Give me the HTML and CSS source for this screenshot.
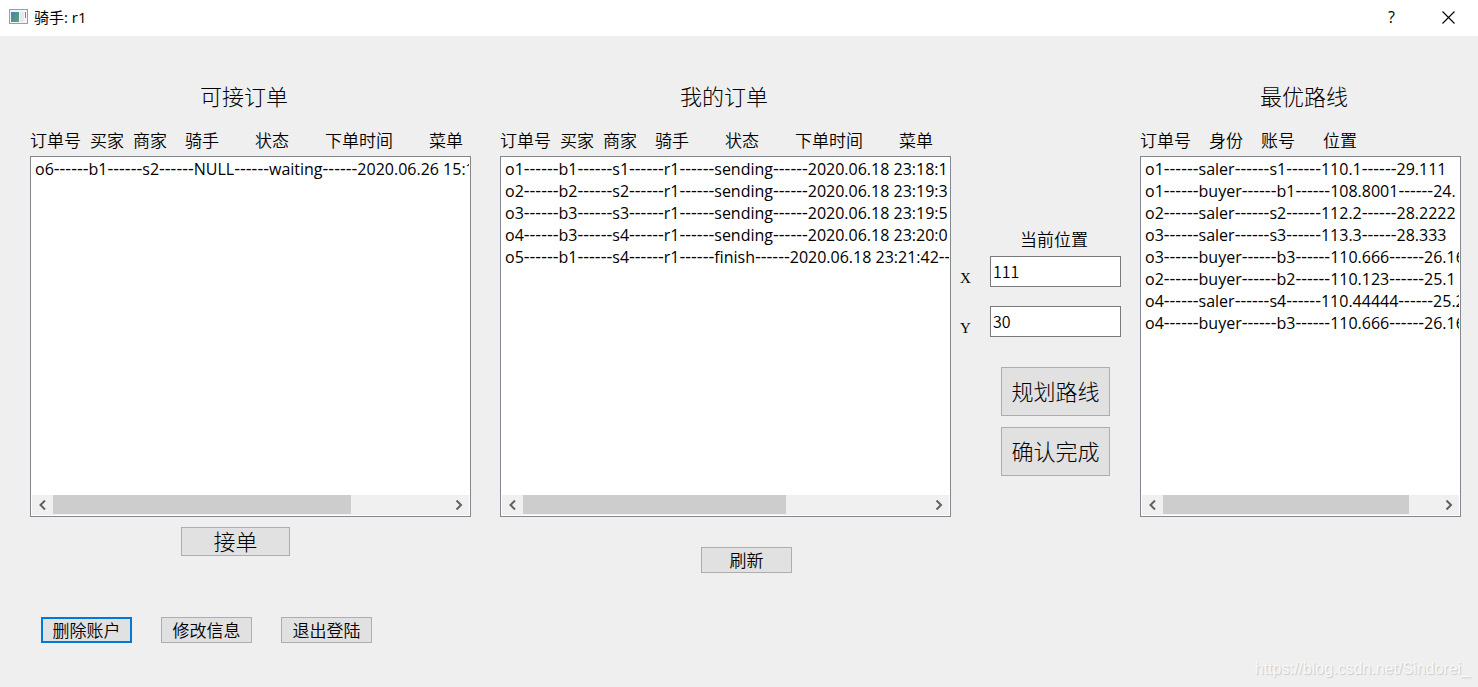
FILE: index.html
```html
<!DOCTYPE html>
<html lang="zh-CN">
<head>
<meta charset="utf-8">
<title>骑手: r1</title>
<link rel="stylesheet" href="styles.css">
</head>
<body>
<header class="titlebar">
  <svg class="app-icon" width="20" height="16" viewBox="0 0 20 16" aria-hidden="true">
    <defs><linearGradient id="pane" x1="0" y1="0" x2="1" y2="1"><stop offset="0" stop-color="#4a80b0"/><stop offset="1" stop-color="#55a878"/></linearGradient></defs>
    <rect x="0.5" y="0.5" width="18" height="14" fill="#f4f5f7" stroke="#9a9da3"/>
    <rect x="2" y="3" width="8" height="10" fill="url(#pane)"/>
    <rect x="11" y="3" width="4" height="10" fill="#e6e8ec"/>
    <rect x="16" y="3" width="1" height="6" fill="#559c9c"/>
  </svg>
  <h1 class="caption">骑手: r1</h1>
  <button class="caption-btn" type="button" aria-label="帮助">?</button>
  <button class="caption-btn" type="button" aria-label="关闭">
    <svg width="13" height="13" viewBox="0 0 13 13" aria-hidden="true"><path d="M0.5 0.5L12.5 12.5M12.5 0.5L0.5 12.5" stroke="#000" stroke-width="1.1" fill="none"/></svg>
  </button>
</header>

<main class="board">
  <section class="panel panel-open">
    <h2 class="panel-title">可接订单</h2>
    <div class="heads"><span>订单号</span><span class="sp1">买家</span><span class="sp1">商家</span><span class="sp2">骑手</span><span class="sp4">状态</span><span class="sp4">下单时间</span><span class="sp4">菜单</span></div>
    <div class="listbox">
      <ul class="rows">
        <li>o6<i>------</i>b1<i>------</i>s2<i>------</i>NULL<i>------</i>waiting<i>------</i>2020.06.26 15:1</li>
      </ul>
      <div class="scrollbar">
        <button class="arrow" type="button" aria-label="向左"><svg width="8" height="10" viewBox="0 0 8 10"><path d="M6 0.5L1.5 5L6 9.5"/></svg></button>
        <div class="track"><div class="thumb" style="width:75.5%"></div></div>
        <button class="arrow" type="button" aria-label="向右"><svg width="8" height="10" viewBox="0 0 8 10"><path d="M1.5 0.5L6 5L1.5 9.5"/></svg></button>
      </div>
    </div>
    <div class="actions"><button class="btn btn-accept" type="button">接单</button></div>
  </section>

  <section class="panel panel-mine">
    <h2 class="panel-title">我的订单</h2>
    <div class="heads"><span>订单号</span><span class="sp1">买家</span><span class="sp1">商家</span><span class="sp2">骑手</span><span class="sp4">状态</span><span class="sp4">下单时间</span><span class="sp4">菜单</span></div>
    <div class="listbox">
      <ul class="rows">
        <li>o1<i>------</i>b1<i>------</i>s1<i>------</i>r1<i>------</i>sending<i>------</i>2020.06.18 23:18:1</li>
        <li>o2<i>------</i>b2<i>------</i>s2<i>------</i>r1<i>------</i>sending<i>------</i>2020.06.18 23:19:3</li>
        <li>o3<i>------</i>b3<i>------</i>s3<i>------</i>r1<i>------</i>sending<i>------</i>2020.06.18 23:19:5</li>
        <li>o4<i>------</i>b3<i>------</i>s4<i>------</i>r1<i>------</i>sending<i>------</i>2020.06.18 23:20:0</li>
        <li>o5<i>------</i>b1<i>------</i>s4<i>------</i>r1<i>------</i>finish<i>------</i>2020.06.18 23:21:42<i>--</i></li>
      </ul>
      <div class="scrollbar">
        <button class="arrow" type="button" aria-label="向左"><svg width="8" height="10" viewBox="0 0 8 10"><path d="M6 0.5L1.5 5L6 9.5"/></svg></button>
        <div class="track"><div class="thumb" style="width:65%"></div></div>
        <button class="arrow" type="button" aria-label="向右"><svg width="8" height="10" viewBox="0 0 8 10"><path d="M1.5 0.5L6 5L1.5 9.5"/></svg></button>
      </div>
    </div>
    <div class="actions"><button class="btn btn-refresh" type="button">刷新</button></div>
  </section>

  <section class="position">
    <h2 class="position-title">当前位置</h2>
    <div class="field"><label for="pos-x">X</label><input id="pos-x" type="text" value="111"></div>
    <div class="field"><label for="pos-y">Y</label><input id="pos-y" type="text" value="30"></div>
    <div class="commands">
      <button class="btn btn-large" type="button">规划路线</button>
      <button class="btn btn-large" type="button">确认完成</button>
    </div>
  </section>

  <section class="panel panel-route">
    <h2 class="panel-title">最优路线</h2>
    <div class="heads"><span>订单号</span><span class="sp2">身份</span><span class="sp2">账号</span><span class="sp3">位置</span></div>
    <div class="listbox">
      <ul class="rows">
        <li>o1<i>------</i>saler<i>------</i>s1<i>------</i>110.1<i>------</i>29.111</li>
        <li>o1<i>------</i>buyer<i>------</i>b1<i>------</i>108.8001<i>------</i>24.</li>
        <li>o2<i>------</i>saler<i>------</i>s2<i>------</i>112.2<i>------</i>28.2222</li>
        <li>o3<i>------</i>saler<i>------</i>s3<i>------</i>113.3<i>------</i>28.333</li>
        <li>o3<i>------</i>buyer<i>------</i>b3<i>------</i>110.666<i>------</i>26.16</li>
        <li>o2<i>------</i>buyer<i>------</i>b2<i>------</i>110.123<i>------</i>25.1</li>
        <li>o4<i>------</i>saler<i>------</i>s4<i>------</i>110.44444<i>------</i>25.2</li>
        <li>o4<i>------</i>buyer<i>------</i>b3<i>------</i>110.666<i>------</i>26.16</li>
      </ul>
      <div class="scrollbar">
        <button class="arrow" type="button" aria-label="向左"><svg width="8" height="10" viewBox="0 0 8 10"><path d="M6 0.5L1.5 5L6 9.5"/></svg></button>
        <div class="track"><div class="thumb" style="width:89.5%"></div></div>
        <button class="arrow" type="button" aria-label="向右"><svg width="8" height="10" viewBox="0 0 8 10"><path d="M1.5 0.5L6 5L1.5 9.5"/></svg></button>
      </div>
    </div>
    <div class="actions"></div>
  </section>
</main>

<footer class="account">
  <button class="btn btn-default" type="button">删除账户</button>
  <button class="btn" type="button">修改信息</button>
  <button class="btn" type="button">退出登陆</button>
</footer>
<div class="watermark">https://blog.csdn.net/Sindorei_</div>
</body>
</html>
```
FILE: styles.css
```css
* { box-sizing: border-box; }

body {
  margin: 0;
  min-height: 100vh;
  display: flex;
  flex-direction: column;
  position: relative;
  background: #efefef;
  color: #000;
  font-family: "Noto Sans CJK SC", sans-serif;
  font-weight: 350;
  font-size: 17px;
}

h1, h2, ul { margin: 0; padding: 0; font-weight: inherit; }

button, input { font: inherit; color: inherit; border-radius: 0; margin: 0; padding: 0; }

.titlebar {
  display: flex;
  align-items: center;
  height: 36px;
  padding: 0 1px 2px 9px;
  background: #fff;
}

.caption {
  flex: 1;
  margin-left: 5px;
  font: 400 15px/20px "Open Sans", "Noto Sans CJK SC", sans-serif;
}

.caption-btn {
  width: 57px;
  height: 34px;
  display: flex;
  align-items: center;
  justify-content: center;
  border: 0;
  background: none;
  font: 400 16px/20px "Open Sans", sans-serif;
}

.board {
  flex: 1;
  display: grid;
  grid-template-columns: minmax(0, 461fr) minmax(0, 451fr) 161px minmax(0, 331fr);
  column-gap: 9px;
  padding: 0 17px 0 30px;
}

.panel { display: flex; flex-direction: column; }
.panel-open { padding-right: 20px; }
.panel-route { padding-left: 10px; }

.panel-title {
  margin-top: 44px;
  padding-left: 170px;
  font-weight: 300;
  font-size: 22px;
  line-height: 30px;
}
.panel-mine .panel-title { padding-left: 180px; }
.panel-route .panel-title { padding-left: 120px; }

.heads {
  display: flex;
  margin: 18px 0 4px;
  line-height: 24px;
  white-space: nowrap;
}
.sp1 { margin-left: 9px; }
.sp2 { margin-left: 18px; }
.sp3 { margin-left: 28px; }
.sp4 { margin-left: 36px; }

.listbox {
  flex: 1;
  display: flex;
  flex-direction: column;
  padding: 1px;
  border: 1px solid #828790;
  background: #fff;
}

.rows {
  flex: 1;
  margin: 0 0 0 3px;
  overflow: hidden;
  list-style: none;
  font: 400 16px/21px "Open Sans", sans-serif;
  white-space: nowrap;
}
.rows li { height: 22px; }
.rows i { font-style: normal; font-size: 18px; }

.scrollbar { display: flex; height: 20px; background: #f0f0f0; }
.arrow {
  width: 21px;
  display: flex;
  align-items: center;
  justify-content: center;
  border: 0;
  background: none;
}
.arrow path { fill: none; stroke: #606060; stroke-width: 2; }
.track { flex: 1; }
.thumb { height: 19px; background: #cdcdcd; }

.actions { height: 100px; }

.btn {
  width: 91px;
  height: 26px;
  border: 1px solid #adadad;
  background: #e1e1e1;
  line-height: 22px;
  text-align: center;
  white-space: nowrap;
}
.btn-accept,
.btn-large { width: 109px; padding-bottom: 4px; font-weight: 300; font-size: 22px; }
.btn-accept { height: 29px; margin: 10px 0 0 151px; }
.btn-large { height: 49px; }
.btn-refresh { margin: 30px 0 0 201px; }
.btn-default { border: 2px solid #0078d7; }

.position { padding-top: 192px; }
.position-title { padding-left: 60px; font-size: 17px; line-height: 22px; margin-bottom: 6px; }
.field {
  display: grid;
  grid-template-columns: 30px 1fr;
  align-items: end;
  margin-bottom: 19px;
}
.field label { font: 400 15px/18px "Liberation Serif", serif; }
.field input {
  width: 100%;
  height: 31px;
  padding: 0 2px 2px;
  border: 1px solid #7a7a7a;
  background: #fff;
  font-size: 16px;
}
.commands {
  display: flex;
  flex-direction: column;
  gap: 11px;
  padding: 11px 0 0 41px;
}

.account { display: flex; gap: 29px; padding: 0 41px 44px; }

.watermark {
  position: absolute;
  right: 8px;
  bottom: 8px;
  color: #f8f8f8;
  font: 400 16px/20px "Liberation Sans", sans-serif;
  text-shadow: 1px 1px 1px #c8c8c8;
}
```
